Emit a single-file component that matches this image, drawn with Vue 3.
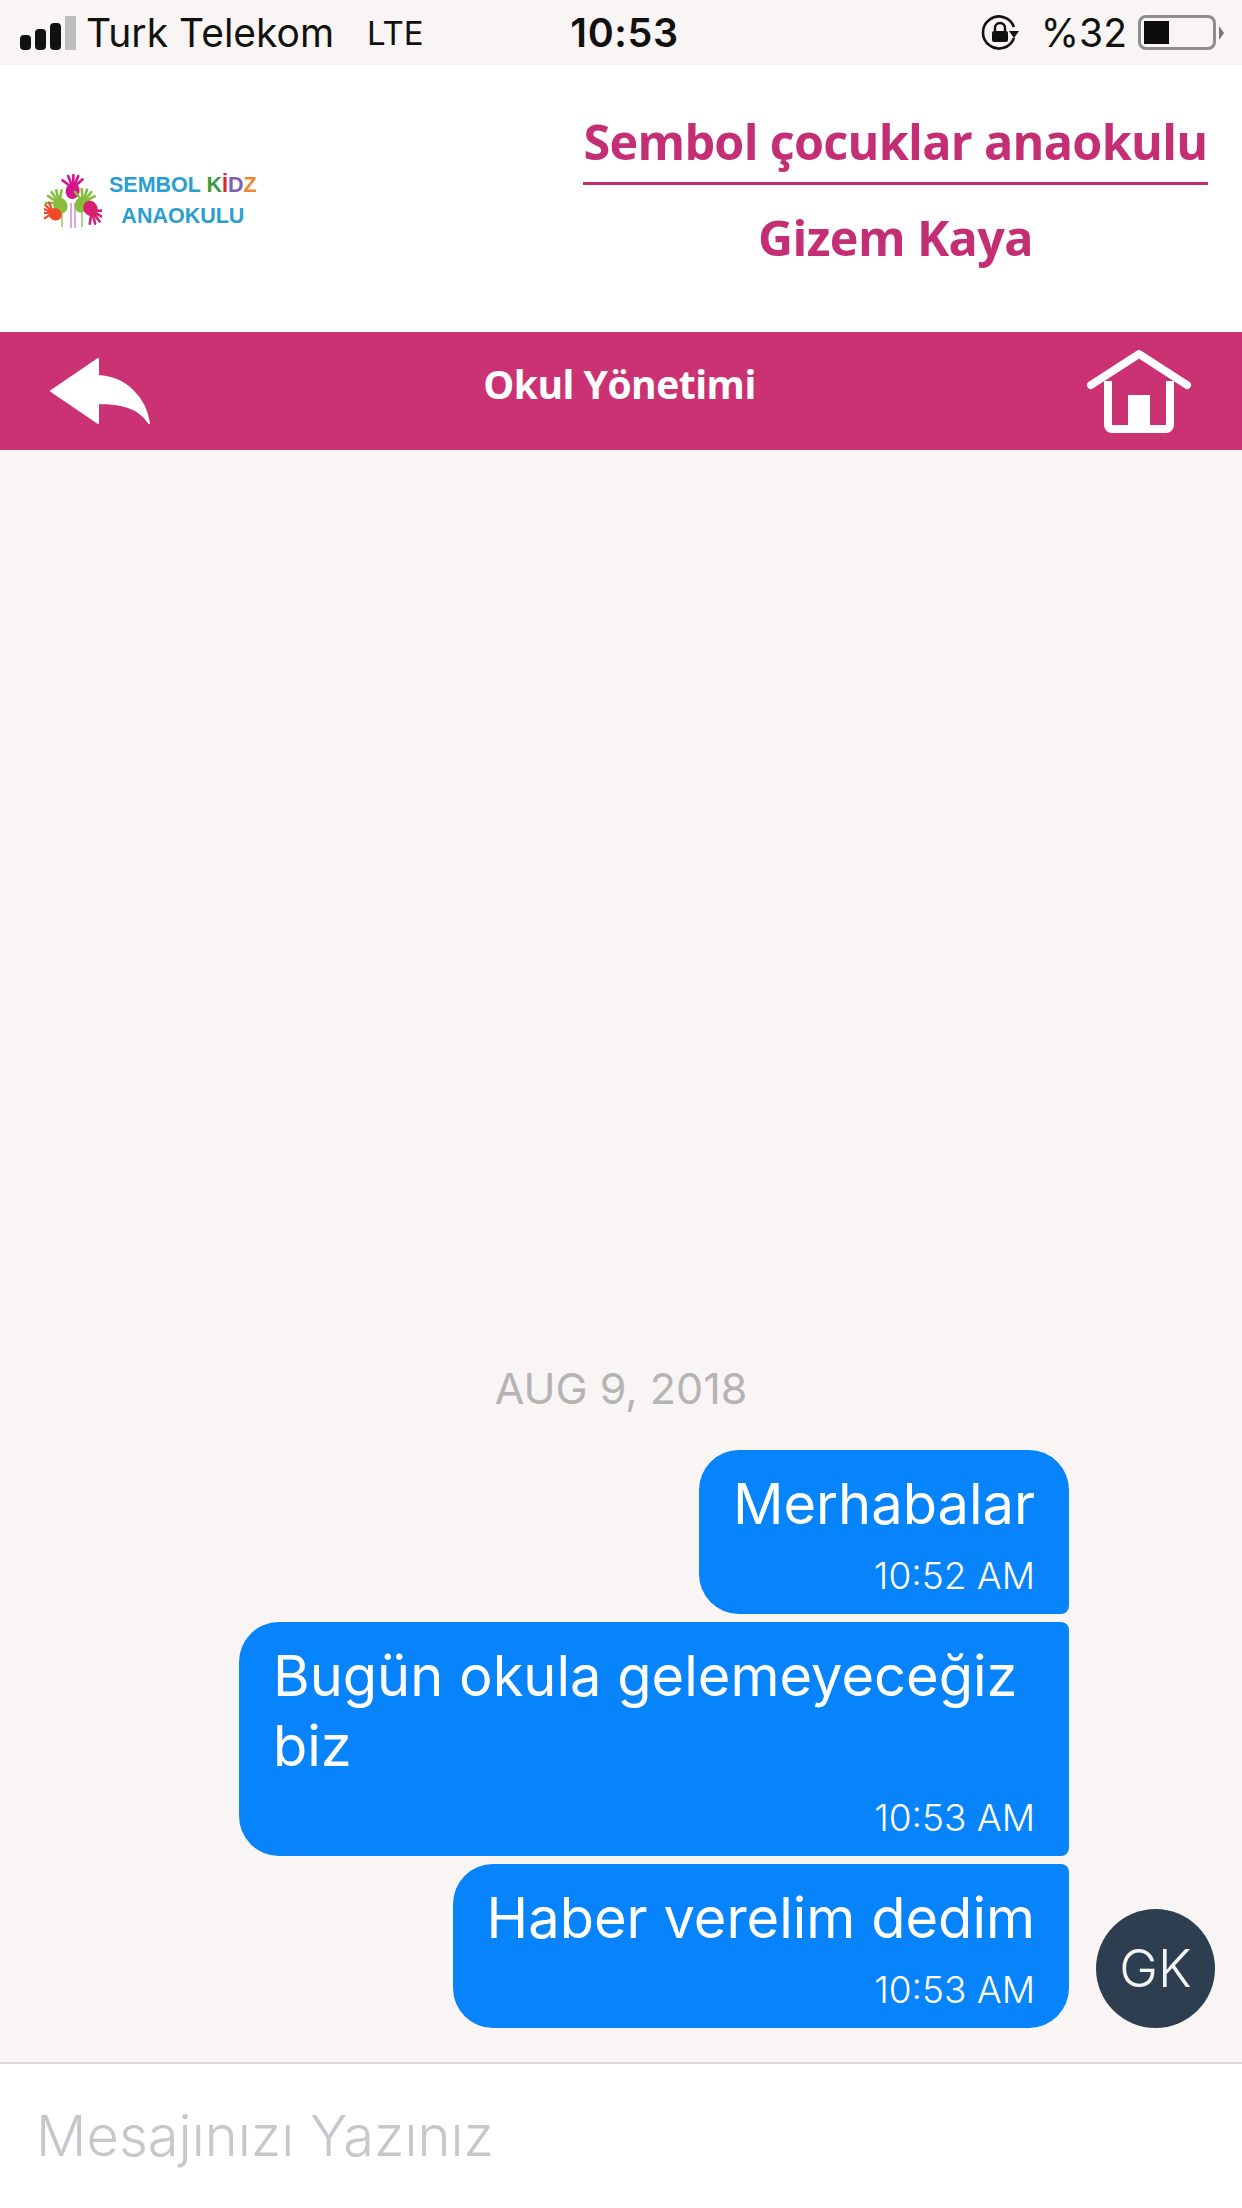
<script setup>
const messages = [
  { id: 1, text: 'Merhabalar', time: '10:52 AM', shape: 'first' },
  { id: 2, text: 'Bugün okula gelemeyeceğiz biz', time: '10:53 AM', shape: 'middle' },
  { id: 3, text: 'Haber verelim dedim', time: '10:53 AM', shape: 'last' }
]

// finger directions for the logo hands, in degrees from the wrist
const fingers = [-62, -30, -6, 16, 40]
const hands = [
  { id: 'top', x: 29, y: 15, scale: 1, rot: 8, color: '#d4148c' },
  { id: 'left', x: 15, y: 30, scale: 1, rot: -28, color: '#86bd3a' },
  { id: 'right', x: 39, y: 29, scale: 1, rot: 24, color: '#86bd3a' },
  { id: 'low-left', x: 9, y: 40, scale: 0.85, rot: -60, color: '#f0492a' },
  { id: 'low-right', x: 48, y: 38, scale: 1, rot: 150, color: '#d81f70' }
]
</script>

<template>
  <div class="screen">
    <div class="status-bar">
      <div class="status-left">
        <div class="signal">
          <i class="b1"></i><i class="b2"></i><i class="b3"></i><i class="b4"></i>
        </div>
        <span class="carrier">Turk Telekom</span>
        <span class="net">LTE</span>
      </div>
      <div class="clock">10:53</div>
      <div class="status-right">
        <svg class="rot-lock" width="40" height="38" viewBox="0 0 40 38">
          <path d="M33 24 A16 16 0 1 1 33 13" fill="none" stroke="#111" stroke-width="2.6" />
          <path d="M28 17 L38 17 L33 24 Z" fill="#111" />
          <rect x="11" y="17" width="16" height="11" rx="2" fill="#111" />
          <path d="M14 18 V14 a5 5 0 0 1 10 0 V18" fill="none" stroke="#111" stroke-width="2.4" />
        </svg>
        <span class="batt-pct">%32</span>
        <div class="battery"><div class="battery-fill"></div></div>
        <div class="battery-nub"></div>
      </div>
    </div>

    <header class="top">
      <div class="logo">
        <svg width="58" height="56" viewBox="0 0 58 56">
          <path d="M27 30 V55 M31 30 V55" stroke="#d9a8dc" stroke-width="2" />
          <path d="M18 38 V54 M38 38 V54" stroke="#b5d08a" stroke-width="2" />
          <g
            v-for="h in hands"
            :key="h.id"
            :transform="`translate(${h.x} ${h.y}) rotate(${h.rot}) scale(${h.scale})`"
            :fill="h.color"
            :stroke="h.color"
          >
            <ellipse cx="0" cy="3" rx="7" ry="8" stroke="none" />
            <line
              v-for="f in fingers"
              :key="f"
              x1="0"
              y1="0"
              x2="0"
              y2="-13"
              stroke-width="2.6"
              stroke-linecap="round"
              :transform="`rotate(${f})`"
            />
          </g>
        </svg>
        <div class="logo-text">
          <div>SEMBOL <span class="k">K</span><span class="i">İ</span><span class="d">D</span><span class="z">Z</span></div>
          <div>ANAOKULU</div>
        </div>
      </div>
      <div class="school">
        <div class="school-name">Sembol çocuklar anaokulu</div>
        <div class="user-name">Gizem Kaya</div>
      </div>
    </header>

    <nav class="nav">
      <svg class="nav-back" width="104" height="70" viewBox="0 0 104 70">
        <path d="M2 34 L49 2 L49 19 C76 20 96 40 100 66 C90 50 72 46 49 46 L49 66 Z" fill="#fff" stroke="#fff" stroke-width="2" stroke-linejoin="round" />
      </svg>
      <div class="nav-title">Okul Yönetimi</div>
      <svg class="nav-home" width="106" height="86" viewBox="0 0 106 86">
        <path d="M5 36 L53 5 L101 36" fill="none" stroke="#fff" stroke-width="8" stroke-linecap="round" stroke-linejoin="round" />
        <path d="M22 32 V76 a4 4 0 0 0 4 4 H80 a4 4 0 0 0 4 -4 V32" fill="none" stroke="#fff" stroke-width="8" />
        <rect x="42" y="46" width="22" height="34" fill="#fff" />
      </svg>
    </nav>

    <main class="chat">
      <div class="date">AUG 9, 2018</div>
      <div class="thread">
        <div class="bubbles">
          <div v-for="m in messages" :key="m.id" class="bubble" :class="m.shape">
            <div class="bubble-text">{{ m.text }}</div>
            <div class="bubble-time">{{ m.time }}</div>
          </div>
        </div>
        <div class="avatar">GK</div>
      </div>
    </main>

    <footer class="composer">Mesajınızı Yazınız</footer>
  </div>
</template>

<style scoped>
.screen {
  width: 1242px;
  height: 2208px;
  display: flex;
  flex-direction: column;
  background: #f8f5f4;
  font-family: Inter, "Liberation Sans", sans-serif;
  overflow: hidden;
}

.status-bar {
  height: 65px;
  flex: none;
  display: grid;
  grid-template-columns: 1fr auto 1fr;
  align-items: center;
  color: #111;
  font-size: 39px;
  padding: 0 18px 0 20px;
  box-sizing: border-box;
}
.status-left { display: flex; align-items: center; }
.signal { display: flex; align-items: flex-end; gap: 4px; height: 34px; margin-right: 10px; }
.signal i { display: block; width: 11px; background: #111; border-radius: 4px; }
.signal .b1 { height: 15px; }
.signal .b2 { height: 21px; }
.signal .b3 { height: 27px; }
.signal .b4 { height: 34px; background: #bdbdbd; border-radius: 1px; }
.carrier { width: 281px; white-space: nowrap; }
.net { font-size: 33px; }
.clock { font-weight: 600; font-size: 39.5px; letter-spacing: 0.6px; margin-left: 5px; }
.status-right { display: flex; align-items: center; justify-content: flex-end; }
.rot-lock { margin-right: 20px; }
.batt-pct { margin-right: 11px; font-size: 39px; }
.battery {
  width: 78px;
  height: 35px;
  box-sizing: border-box;
  border: 3px solid #8e8e8e;
  border-radius: 8px;
  padding: 3px;
}
.battery-fill { width: 25px; height: 100%; background: #0c0c0c; }
.battery-nub {
  width: 0;
  height: 0;
  margin-left: 3px;
  border-left: 5px solid #777;
  border-top: 7px solid transparent;
  border-bottom: 7px solid transparent;
}

.top {
  height: 267px;
  flex: none;
  background: #fff;
  display: flex;
  align-items: center;
  justify-content: space-between;
  padding: 0 34px 0 44px;
  box-sizing: border-box;
}
.logo { display: flex; align-items: center; gap: 7px; margin-top: 4px; }
.logo-text {
  font-family: "Liberation Sans", sans-serif;
  font-weight: 700;
  font-size: 21.5px;
  line-height: 31px;
  color: #2a9fd0;
  text-align: center;
}
.logo-text .k { color: #3c9a3a; }
.logo-text .i { color: #d8262c; }
.logo-text .d { color: #7f5fb5; }
.logo-text .z { color: #e98a2b; }

.school {
  width: 625px;
  margin-bottom: 20px;
  color: #c42e74;
  font-family: "Open Sans", sans-serif;
  font-weight: 700;
  text-align: center;
}
.school-name {
  font-size: 48.5px;
  line-height: 60px;
  letter-spacing: -0.7px;
  padding-bottom: 11px;
  border-bottom: 3px solid #c42e74;
  white-space: nowrap;
}
.user-name { font-size: 48.5px; line-height: 60px; margin-top: 22px; letter-spacing: -0.6px; }

.nav {
  height: 118px;
  flex: none;
  background: #cb3274;
  display: flex;
  align-items: center;
  justify-content: space-between;
  padding: 0 50px 0 49px;
  box-sizing: border-box;
}
.nav-back { margin-top: 2px; }
.nav-home { margin-top: 2px; }
.nav-title {
  color: #fff;
  font-family: "Open Sans", sans-serif;
  font-weight: 700;
  font-size: 39px;
  letter-spacing: -0.5px;
  margin-bottom: 16px;
}

.chat {
  flex: 1;
  display: flex;
  flex-direction: column;
  justify-content: flex-end;
  padding: 0 27px 34px 0;
}
.date {
  text-align: center;
  padding-left: 27px;
  font-size: 43px;
  line-height: 48px;
  color: #b4b4b4;
  margin-bottom: 38px;
}
.thread { display: flex; align-items: flex-end; justify-content: flex-end; gap: 27px; }
.bubbles { display: flex; flex-direction: column; align-items: flex-end; gap: 8px; }
.bubble {
  max-width: 830px;
  box-sizing: border-box;
  background: #0784fb;
  color: #fff;
  padding: 19px 34px 0;
  border-radius: 40px;
}
.bubble.first { border-bottom-right-radius: 8px; }
.bubble.middle { border-top-right-radius: 8px; border-bottom-right-radius: 8px; }
.bubble.last { border-top-right-radius: 8px; }
.bubble-text { font-size: 56px; line-height: 70px; font-weight: 400; }
.bubble-time { font-size: 37px; line-height: 42px; text-align: right; padding: 16px 0 17px; font-weight: 300; }
.avatar {
  width: 119px;
  height: 119px;
  flex: none;
  border-radius: 50%;
  background: #2c3e50;
  color: #f2f4f6;
  font-size: 52px;
  font-weight: 300;
  display: flex;
  align-items: center;
  justify-content: center;
}

.composer {
  height: 146px;
  flex: none;
  box-sizing: border-box;
  background: #fff;
  border-top: 2px solid #dcdcdc;
  color: #c5c7cc;
  font-size: 56px;
  font-weight: 300;
  padding: 38px 0 0 36px;
}
</style>
